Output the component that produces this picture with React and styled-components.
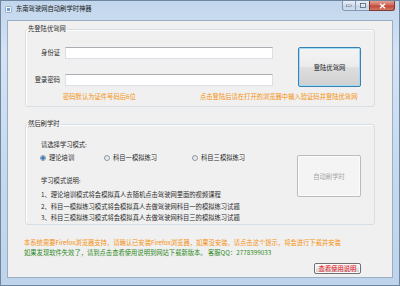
import styled, { createGlobalStyle } from 'styled-components'

const Global = createGlobalStyle`
  html, body {
    margin: 0;
    padding: 0;
    width: 400px;
    height: 286px;
    overflow: hidden;
  }
  body {
    font-family: "Noto Sans CJK SC", "Noto Sans", sans-serif;
    font-size: 6.3px;
    color: #2c2c2c;
  }
`

const Window = styled.div`
  width: 400px;
  height: 286px;
  box-sizing: border-box;
  border: 1px solid #6f86a3;
  background: linear-gradient(180deg, #c2d6ec 0%, #d5e3f3 18%, #c6d9ee 60%, #bfd3ea 100%);
  display: flex;
  flex-direction: column;
`

const TitleBar = styled.div`
  height: 19px;
  display: flex;
  align-items: flex-start;
  flex-shrink: 0;
`

const AppIcon = styled.svg`
  margin: 5px 0 0 4px;
  width: 7px;
  height: 7px;
`

const Title = styled.div`
  margin: 4px 0 0 4px;
  line-height: 8px;
  color: #1a1a1a;
`

const Controls = styled.div`
  margin-left: auto;
  margin-right: 4px;
  display: flex;
`

const CapButton = styled.div`
  width: ${({ $w }) => $w}px;
  height: 10px;
  box-sizing: border-box;
  border: 1px solid ${({ $close }) => ($close ? '#7b3a34' : '#8196b1')};
  border-top: none;
  margin-left: -1px;
  border-radius: ${({ $r }) => $r || '0'};
  background: ${({ $close }) =>
    $close
      ? 'linear-gradient(180deg, #e3a193 0%, #d06a58 45%, #c0453a 55%, #d27a62 100%)'
      : 'linear-gradient(180deg, #e8eff7 0%, #d5e1ee 45%, #c3d3e5 55%, #d2e0ef 100%)'};
  display: flex;
  align-items: center;
  justify-content: center;
`

const Client = styled.div`
  flex: 1;
  margin: 0 6px 7px 6px;
  border: 1px solid #9aaec6;
  background: #f0f0f0;
  padding: 4px 17px 2px 17px;
  display: flex;
  flex-direction: column;
`

const Group = styled.fieldset`
  margin: ${({ $top }) => $top}px 0 0 0;
  padding: ${({ $pad }) => $pad};
  border: 1px solid #d5dfe5;
  border-radius: 3px;
  box-shadow: inset 1px 1px 0 #fff;
  min-width: 0;
`

const Legend = styled.legend`
  margin-left: 1px;
  padding: 0 1px;
  line-height: 8px;
  color: #2c2c2c;
`

const LoginGrid = styled.div`
  display: grid;
  grid-template-columns: 30px 208px 63px;
  grid-template-rows: 12px 12px;
  column-gap: 5px;
  row-gap: 15px;
  align-items: center;
  padding-left: 4px;
`

const Label = styled.div`
  text-align: right;
  white-space: nowrap;
  line-height: 8px;
`

const Input = styled.input`
  width: 100%;
  height: 12px;
  box-sizing: border-box;
  margin: 0;
  padding: 0 2px;
  border: 1px solid #dbdfe6;
  border-top-color: #abadb3;
  background: #fff;
  outline: none;
`

const Button = styled.button`
  box-sizing: border-box;
  margin: 0;
  padding: 0;
  font-family: inherit;
  font-size: 6.3px;
  border-radius: 2px;
  width: ${({ $w }) => $w}px;
  height: ${({ $h }) => $h}px;
  border: 1px solid ${({ $focus, disabled }) => ($focus ? '#3c7fb1' : disabled ? '#b8bcbf' : '#707070')};
  box-shadow: ${({ $focus }) => ($focus ? 'inset 0 0 0 1px #9fdcf7' : 'inset 0 0 0 1px #fcfcfc')};
  background: ${({ disabled }) =>
    disabled ? '#f4f4f4' : 'linear-gradient(180deg, #f4f4f4 0%, #ececec 48%, #dedede 52%, #d0d0d0 100%)'};
  color: ${({ $color, disabled }) => (disabled ? '#a6a6a6' : $color || '#1a1a1a')};
`

const LoginButton = styled(Button)`
  grid-column: 3;
  grid-row: 1 / 3;
  margin-left: 20px;
  align-self: start;
`

const HintRow = styled.div`
  display: flex;
  margin-top: 7px;
  padding-left: 37px;
  line-height: 8px;
  color: #f5900f;
  white-space: nowrap;
`

const HintFirst = styled.span`
  width: 137px;
`

const StudyBody = styled.div`
  display: flex;
  align-items: flex-start;
  padding-left: 15px;
`

const StudyLeft = styled.div`
  flex: 1;
  display: flex;
  flex-direction: column;
`

const Line = styled.div`
  line-height: 8px;
  margin-top: ${({ $mt }) => $mt || 0}px;
  white-space: nowrap;
`

const RadioRow = styled.div`
  display: flex;
  margin-top: 5px;
  margin-left: -1px;
  line-height: 8px;
`

const Option = styled.label`
  width: ${({ $w }) => $w}px;
  display: flex;
  align-items: center;
  gap: 3px;
  white-space: nowrap;
`

const RadioDot = styled.span`
  width: 6px;
  height: 6px;
  box-sizing: border-box;
  border-radius: 50%;
  border: 1px solid #8f9aa6;
  background: ${({ $on }) =>
    $on
      ? 'radial-gradient(circle, #2f6fb8 0, #3f86cf 1.5px, #e9eef3 2px)'
      : 'linear-gradient(135deg, #d8dde2, #fbfbfb)'};
`

const Explain = styled.ol`
  margin: 4px 0 0 0;
  padding: 0;
  list-style: none;
  line-height: 11.5px;
  white-space: nowrap;
`

const StartButton = styled(Button)`
  margin: 14px 13px 0 0;
  flex-shrink: 0;
`

const Note = styled.div`
  margin: ${({ $mt }) => $mt || 0}px 0 0 -1px;
  line-height: 10px;
  color: ${({ $color }) => $color};
  white-space: nowrap;
`

const Footer = styled.div`
  display: flex;
  justify-content: flex-end;
  padding-right: 14px;
  margin-top: 5px;
`

export default function App() {
  return (
    <Window>
      <Global />
      <TitleBar>
        <AppIcon viewBox="0 0 7 7">
          <rect x="0.5" y="0.5" width="6" height="6" rx="1" fill="#f4f7fb" stroke="#7d93ad" strokeWidth="0.7" />
          <rect x="2" y="2" width="3" height="3" fill="#6e9fd6" />
        </AppIcon>
        <Title>东南驾驶网自动刷学时神器</Title>
        <Controls>
          <CapButton $w={14} $r="0 0 0 3px">
            <svg width="6" height="3" viewBox="0 0 6 3">
              <rect x="0.5" y="1" width="5" height="1.5" fill="#fff" stroke="#4a5c73" strokeWidth="0.5" />
            </svg>
          </CapButton>
          <CapButton $w={15}>
            <svg width="6" height="5" viewBox="0 0 6 5">
              <rect x="0.5" y="0.5" width="5" height="4" fill="none" stroke="#4a5c73" strokeWidth="0.8" />
              <rect x="1.2" y="1.4" width="3.6" height="2.4" fill="none" stroke="#fff" strokeWidth="0.5" />
            </svg>
          </CapButton>
          <CapButton $w={26} $close $r="0 0 3px 0">
            <svg width="7" height="6" viewBox="0 0 7 6">
              <path d="M1 0.8 L6 5.2 M6 0.8 L1 5.2" stroke="#fff" strokeWidth="1.4" />
            </svg>
          </CapButton>
        </Controls>
      </TitleBar>
      <Client>
        <Group $top={0} $pad="14px 0 5px 0">
          <Legend>先登陆优驾网</Legend>
          <LoginGrid>
            <Label>身份证</Label>
            <Input />
            <LoginButton $w={63} $h={40} $focus>登陆优驾网</LoginButton>
            <Label>登录密码</Label>
            <Input type="password" />
          </LoginGrid>
          <HintRow>
            <HintFirst>密码默认为证件号码后6位</HintFirst>
            <span>点击登陆后请在打开的浏览器中输入验证码并登陆优驾网</span>
          </HintRow>
        </Group>
        <Group $top={13} $pad="13px 0 0 0">
          <Legend>然后刷学时</Legend>
          <StudyBody>
            <StudyLeft>
              <Line>请选择学习模式:</Line>
              <RadioRow>
                <Option $w={64}><RadioDot $on />理论培训</Option>
                <Option $w={88}><RadioDot />科目一模拟练习</Option>
                <Option $w={60}><RadioDot />科目三模拟练习</Option>
              </RadioRow>
              <Line $mt={15}>学习模式说明:</Line>
              <Explain>
                <li>1、理论培训模式将会模拟真人去随机点击驾驶网里面的视频课程</li>
                <li>2、科目一模拟练习模式将会模拟真人去做驾驶网科目一的模拟练习试题</li>
                <li>3、科目三模拟练习模式将会模拟真人去做驾驶网科目三的模拟练习试题</li>
              </Explain>
            </StudyLeft>
            <StartButton $w={64} $h={42} disabled>自动刷学时</StartButton>
          </StudyBody>
        </Group>
        <Note $mt={13} $color="#f5900f">
          本系统需要Firefox浏览器支持，请确认已安装Firefox浏览器，如果没安装，请点击这个提示，将会进行下载并安装
        </Note>
        <Note $color="#2f8a22">
          如果发现软件失效了，请到点击查看使用说明到网站下载新版本。 客服QQ：2778399033
        </Note>
        <Footer>
          <Button $w={47} $h={11} $color="#e8141b">查看使用说明</Button>
        </Footer>
      </Client>
    </Window>
  )
}
